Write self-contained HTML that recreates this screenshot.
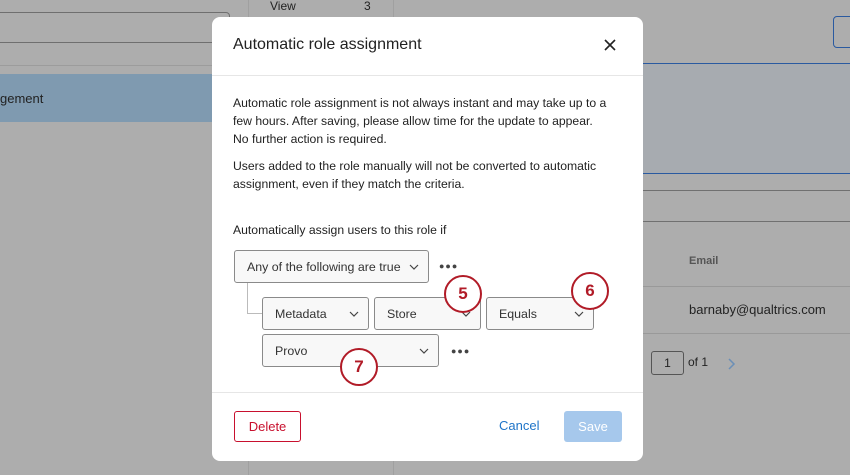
<!DOCTYPE html>
<html><head><style>
*{box-sizing:border-box;margin:0;padding:0}
body{width:850px;height:475px;overflow:hidden;background:#adadad;font-family:"Liberation Sans",sans-serif;position:relative}
.a{position:absolute}
.t{font-size:12.2px;color:#222}
.sel{position:absolute;border:1px solid #8a8a8a;border-radius:3px;background:#f8f8f8;height:33px;font-size:12.4px;color:#333;padding:9px 0 0 12px}
.sel svg{position:absolute;right:9px;top:13px}
.c{position:absolute;width:38px;height:38px;border:2.5px solid #b11b27;border-radius:50%;background:#fff;color:#b11b27;font-weight:bold;font-size:17px;text-align:center;line-height:33px}
.dots{position:absolute;font-size:9px;color:#444;letter-spacing:1px}
</style></head><body>
<div class="a" style="left:0;top:12px;width:230px;height:31px;border:1px solid #6f6f6f;border-left:none;border-radius:0 4px 4px 0"></div>
<div class="a" style="left:0;top:65px;width:212px;height:1px;background:#9c9c9c"></div>
<div class="a" style="left:0;top:74px;width:212px;height:48px;background:#7f9ab0"></div>
<div class="a t" style="left:0;top:91px;font-size:13px;color:#222">gement</div>
<div class="a" style="left:248px;top:0;width:1px;height:475px;background:#a0a0a0"></div>
<div class="a" style="left:393px;top:0;width:1px;height:475px;background:#a0a0a0"></div>
<div class="a t" style="left:270px;top:-1px;font-size:12px">View</div>
<div class="a t" style="left:364px;top:-1px;font-size:12px">3</div>
<div class="a" style="left:643px;top:63px;width:207px;height:111px;background:#a7abb0;border-top:1px solid #2a5aa0;border-bottom:1px solid #2a5aa0"></div>
<div class="a" style="left:833px;top:16px;width:30px;height:32px;border:1px solid #2a5aa0;border-radius:4px"></div>
<div class="a" style="left:643px;top:190px;width:207px;height:1px;background:#707070"></div>
<div class="a" style="left:643px;top:221px;width:207px;height:1px;background:#707070"></div>
<div class="a" style="left:689px;top:255px;font-size:11px;font-weight:bold;color:#555">Email</div>
<div class="a" style="left:643px;top:286px;width:207px;height:1px;background:#999"></div>
<div class="a" style="left:689px;top:302px;font-size:13px;color:#222">barnaby@qualtrics.com</div>
<div class="a" style="left:643px;top:333px;width:207px;height:1px;background:#999"></div>
<div class="a" style="left:651px;top:351px;width:33px;height:24px;border:1px solid #555;border-radius:3px;font-size:12px;text-align:center;line-height:22px;color:#222">1</div>
<div class="a" style="left:688px;top:355px;font-size:12px;color:#222">of 1</div>
<svg class="a" style="left:728px;top:358px" width="8" height="12"><path d="M1 1L6 6L1 11" stroke="#6b8fb7" fill="none" stroke-width="1.5"/></svg>

<div class="a" style="left:212px;top:17px;width:431px;height:444px;background:#fff;border-radius:8px">
<div class="a" style="left:21px;top:19px;font-size:16px;color:#222">Automatic role assignment</div>
<svg class="a" style="left:392px;top:22px" width="12" height="12"><path d="M1 1L11 11M11 1L1 11" stroke="#222" stroke-width="1.6"/></svg>
<div class="a" style="left:0;top:58px;width:431px;height:1px;background:#e6e6e6"></div>
<div class="a t" style="left:21px;top:77px;line-height:18px;width:392px">Automatic role assignment is not always instant and may take up to a few hours. After saving, please allow time for the update to appear.<br>No further action is required.</div>
<div class="a t" style="left:21px;top:140px;line-height:18px;width:392px">Users added to the role manually will not be converted to automatic assignment, even if they match the criteria.</div>
<div class="a t" style="left:21px;top:206px">Automatically assign users to this role if</div>
</div>
<div class="sel" style="left:234px;top:250px;width:195px">Any of the following are true<svg width="10" height="6"><path d="M1 1L5 5L9 1" stroke="#444" fill="none" stroke-width="1.2"/></svg></div>
<div class="dots" style="left:439px;top:261px">●●●</div>
<div class="a" style="left:247px;top:283px;width:15px;height:31px;border-left:1px solid #bbb;border-bottom:1px solid #bbb"></div>
<div class="sel" style="left:262px;top:297px;width:107px">Metadata<svg width="10" height="6"><path d="M1 1L5 5L9 1" stroke="#444" fill="none" stroke-width="1.2"/></svg></div>
<div class="sel" style="left:374px;top:297px;width:107px">Store<svg width="10" height="6"><path d="M1 1L5 5L9 1" stroke="#444" fill="none" stroke-width="1.2"/></svg></div>
<div class="sel" style="left:486px;top:297px;width:108px">Equals<svg width="10" height="6"><path d="M1 1L5 5L9 1" stroke="#444" fill="none" stroke-width="1.2"/></svg></div>
<div class="sel" style="left:262px;top:334px;width:177px">Provo<svg width="10" height="6"><path d="M1 1L5 5L9 1" stroke="#444" fill="none" stroke-width="1.2"/></svg></div>
<div class="dots" style="left:451px;top:346px">●●●</div>
<div class="c" style="left:444px;top:275px">5</div>
<div class="c" style="left:571px;top:272px">6</div>
<div class="c" style="left:340px;top:348px">7</div>
<div class="a" style="left:212px;top:392px;width:431px;height:1px;background:#e6e6e6"></div>
<div class="a" style="left:234px;top:411px;width:67px;height:31px;border:1px solid #c8102e;border-radius:3px;color:#c8102e;font-size:13px;text-align:center;line-height:29px">Delete</div>
<div class="a" style="left:499px;top:418px;font-size:13px;color:#1e74c8">Cancel</div>
<div class="a" style="left:564px;top:411px;width:58px;height:31px;background:#a6c8ec;border-radius:3px;color:#fff;font-size:13px;text-align:center;line-height:31px">Save</div>
</body></html>
